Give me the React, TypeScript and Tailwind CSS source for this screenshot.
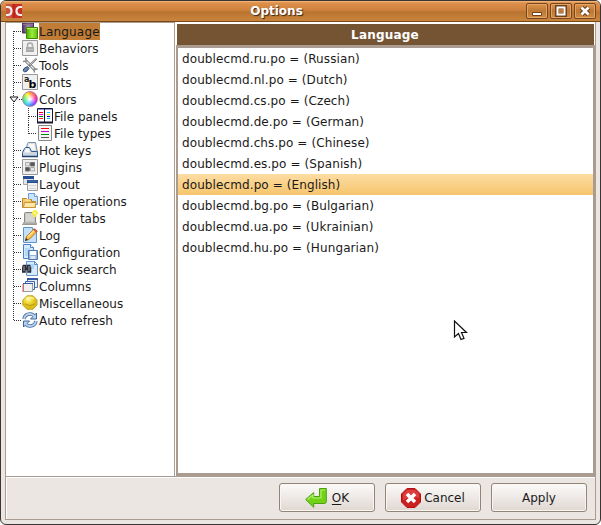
import React from "react";

const HLINE = "h-px bg-[repeating-linear-gradient(90deg,#333_0_1px,transparent_1px_2px)]";
const VLINE = "w-px bg-[repeating-linear-gradient(180deg,#333_0_1px,transparent_1px_2px)]";

function Sheet() {
  return (
    <>
      <path d="M4.500 .5h8l3 3v11h-11z" fill="#d5eaff" stroke="#6796d0" />
      <path d="M6 3h6v5H6z" fill="#aed3f7" />
      <path d="M12.500.5v3h3z" fill="#fff" stroke="#5b8cc8" />
    </>
  );
}

function Icon({ name }: { name: string }) {
  const art: Record<string, React.ReactNode> = {
    Language: (
      <>
        <defs>
          <linearGradient id="pur"><stop stopColor="#4d365a" /><stop offset=".5" stopColor="#a089aa" /><stop offset="1" stopColor="#6d527d" /></linearGradient>
          <linearGradient id="grn"><stop stopColor="#4da900" /><stop offset=".5" stopColor="#9bed3d" /><stop offset="1" stopColor="#62bd0c" /></linearGradient>
        </defs>
        <path d="M.5 0h11v10H.5z" fill="url(#pur)" stroke="#4b3159" />
        <path d="M1 1.500h10" stroke="#8d7399" />
        <path d="M4.500 4.500h11v11h-11z" fill="url(#grn)" stroke="#3c8c00" />
        <path d="M5 5.500h10" stroke="#baf36e" />
      </>
    ),
    Behaviors: (
      <>
        <path d="M.5 .5h15v15H.5z" fill="#f0f0f0" stroke="#999" />
        <path d="M5.500 8V5.500q0-2.500 2.500-2.500t2.500 2.500V8" fill="none" stroke="#aaa" strokeWidth="1.500" />
        <path d="M4 7h8v5H4z" fill="#aaa" />
        <path d="M5 9.500h6" stroke="#c2c2c2" />
      </>
    ),
    Tools: (
      <>
        <path d="M4 4l9 9" stroke="#666" strokeWidth="3" />
        <path d="M4 4l9 9" stroke="#eee" strokeWidth="1.400" />
        <path d="M3.500.8L4.500 4 1 4.500M12.500 15.500L12 12.500l3.500-.5" fill="none" stroke="#888" strokeWidth="1.500" />
        <path d="M14.500 1.500L7 9" stroke="#777" strokeWidth="2" />
        <path d="M14.500 1L8 8" stroke="#ddd" strokeWidth=".8" />
        <path d="M5.500 9.500l1.500 2-2.500 3q-2.500 1-3.500-1l1-2z" fill="#6788b3" stroke="#29486e" />
      </>
    ),
    Fonts: (
      <>
        <path d="M.5 .5h15v15H.5z" fill="#f0f0f0" stroke="#999" />
        <text x="2" y="7.500" fontSize="8" fontWeight="bold" fill="#222" className="font-['DejaVu_Sans']">a</text>
        <text x="6.500" y="13.500" fontSize="11" fontWeight="bold" fill="#000" className="font-['DejaVu_Sans']">b</text>
      </>
    ),
    "File panels": (
      <>
        <path d="M.5 .5h15v14H.5z" fill="#fff" stroke="#171733" />
        <path d="M1 1.500h14" stroke="#8791dd" />
        <path d="M0 14.500h16" stroke="#171733" strokeWidth="2" />
        <path d="M7.500 1v14" stroke="#171733" />
        <path d="M2 4.500h4" stroke="#f00" />
        <path d="M2 6.500h4" stroke="#f0f" /><path d="M2 8.500h4" stroke="#080" /><path d="M2 10.500h4" stroke="#f22" />
        <path d="M10 4.500h3" stroke="#0cf" /><path d="M10 6.500h3" stroke="#ee0" /><path d="M10 8.500h3" stroke="#00f" /><path d="M10 10.500h3" stroke="#0cc" />
      </>
    ),
    "File types": (
      <>
        <path d="M1.500 .5h13v15h-13z" fill="#f5f5f5" stroke="#888" />
        <path d="M4 3.500h8" stroke="#f00" /><path d="M4 6.500h8" stroke="#c0c" />
        <path d="M4 9.500h8" stroke="#080" /><path d="M4 12.500h8" stroke="#555" />
      </>
    ),
    "Hot keys": (
      <>
        <path d="M3.500 10.500l2-9q.3-1 1-1h7l2 10v3h-11z" fill="#ddd" stroke="#7890ad" />
        <path d="M6.500 2h6l.5 6H6z" fill="#f7f7f7" />
        <path d="M.5 14.500v-4l2-4q.5-1 1-1h4l2 4h6v5z" fill="#cdd6df" stroke="#315b92" />
        <path d="M4 6.500h3l1 4H2.500z" fill="#fafafa" /><path d="M0 14.500h16" stroke="#1d4175" strokeWidth="1.500" />
      </>
    ),
    Plugins: (
      <>
        <path d="M.5 .5h15v15H.5z" fill="#f0f0f0" stroke="#999" />
        <path d="M8.500 3.500h4V7h-4zM3.500 8.500h4V12h-4z" fill="#555" stroke="#777" />
        <path d="M3.500 3.500h4V7h-4zM8.500 8.500h4V12h-4z" fill="#e5e5e5" stroke="#aaa" />
      </>
    ),
    Layout: (
      <>
        <path d="M1.500 .5h10v8h-10z" fill="#e1e4e5" stroke="#a3a9ad" />
        <path d="M1 0h11v3H1z" fill="#234e90" />
        <path d="M5.500 5.500h10v9h-10z" fill="#f0f0f0" stroke="#9a9e9e" />
        <path d="M5 4h11v3H5z" fill="#234e90" /><path d="M6 5h9" stroke="#6991c7" strokeWidth=".6" />
        <path d="M7 9.500h7M7 12.500h7" stroke="#d5d8d8" />
      </>
    ),
    "File operations": (
      <>
        <path d="M6.500 .5h6l3 3v8h-9z" fill="#c9e3fc" stroke="#6c9edd" /><path d="M12.500.5v3h3" fill="#fff" stroke="#6c9edd" />
        <path d="M.5 14.500v-9h4l1 1h4v2h4v6z" fill="#f3c663" stroke="#bd882b" />
        <path d="M1.500 14.500l1-5h11.500l-1 5z" fill="#ffe8a5" stroke="#c9953a" /><path d="M3 7h5" stroke="#fff1bd" />
      </>
    ),
    "Folder tabs": (
      <>
        <path d="M2.500 12V3.500q0-1 1-1h9q1 0 1 1V12l1 2.500h-14z" fill="#c9c9c5" stroke="#888a85" />
        <path d="M4 4h8v7H4z" fill="#d5d5d1" /><path d="M1 13.500h14" stroke="#aaa" strokeWidth="2" />
        <path d="M13 0v7M10 3h6" stroke="#f8ed43" strokeWidth="3" /><path d="M13 2v2" stroke="#fff" />
      </>
    ),
    Log: (
      <>
        <path d="M1.500 .5h9l4 4v11h-13z" fill="#c5e1fa" stroke="#5e93cd" /><path d="M10.500.5v4h4" fill="#fff" stroke="#77a4d5" />
        <path d="M3.500 13.500l1-4 7.500-7.500 3 2.500-7.500 7.500z" fill="#fac246" stroke="#bb7118" />
        <path d="M6 9.500l6-6" stroke="#ffe393" strokeWidth="1.500" /><path d="M12 2l3 3" stroke="#c85c3b" strokeWidth="2" /><path d="M3 14l1-3 2 2z" fill="#333" />
      </>
    ),
    Configuration: (
      <>
        <path d="M1.500 .5h7l3 3v11h-10z" fill="#d5eaff" stroke="#4b83c4" /><path d="M8.500.5v3h3" fill="#fff" stroke="#4b83c4" /><path d="M3 4h5v8H3z" fill="#b5d8f7" />
        <path d="M6.500 6.500h9v9h-9z" fill="#8fb3dc" stroke="#4d79b1" /><path d="M8 7h6v4H8z" fill="#fff" /><path d="M8.500 12h5v3h-5z" fill="#dce7f2" />
      </>
    ),
    "Quick search": (
      <>
        <Sheet />
        <path d="M1 4h3v3h1V4h3l1 3v4.500H5.500V9h-2v2.500H0V7z" fill="#30343b" stroke="#202329" strokeWidth=".5" />
        <path d="M2 5v5M7 5v5" stroke="#929aa6" />
      </>
    ),
    Columns: (
      <>
        <path d="M5.500 .5h10v9h-10z" fill="#eceeee" stroke="#5877b2" /><path d="M5 1h11" stroke="#3659a3" strokeWidth="2" />
        <path d="M3.500 3.500h9v8h-9z" fill="#e9edf4" stroke="#4169b0" />
        <path d="M1.500 5.500h9v8h-9z" fill="#f1f1f1" stroke="#999ea5" /><path d="M1 5.500h10" stroke="#3659a3" /><path d="M1 6v8" stroke="#e15151" />
      </>
    ),
    Miscellaneous: (
      <>
        <defs><radialGradient id="yel" cx=".4" cy=".25"><stop stopColor="#fffbb5" /><stop offset=".5" stopColor="#f1df3d" /><stop offset="1" stopColor="#dcbc18" /></radialGradient></defs>
        <path d="M5 .8h6l4 4v5l-4 4.500H5L.8 10V5z" fill="url(#yel)" stroke="#c2a623" />
        <path d="M3 9q5 3 10 0" fill="none" stroke="#b99417" strokeWidth=".8" /><path d="M4 3.500q4-2 8 0" fill="none" stroke="#fffac1" />
      </>
    ),
    "Auto refresh": (
      <>
        <path d="M2 7q1-5 6-5 3 0 4 2" fill="none" stroke="#3e679e" strokeWidth="3.500" />
        <path d="M14.500 1v6h-6z" fill="#b8d2ee" stroke="#3e679e" />
        <path d="M2 7q1-5 6-5 3 0 4.500 2.500" fill="none" stroke="#b8d2ee" strokeWidth="1.800" />
        <path d="M14 9q-1 5-6 5-3 0-4-2" fill="none" stroke="#3e679e" strokeWidth="3.500" />
        <path d="M1.500 15V9h6z" fill="#b8d2ee" stroke="#3e679e" />
        <path d="M14 9q-1 5-6 5-3 0-4.500-2.500" fill="none" stroke="#b8d2ee" strokeWidth="1.800" />
      </>
    ),
  };
  if (name === "Colors")
    return <span className="block size-4 shrink-0 self-start rounded-full border border-[#b97bb5] bg-[radial-gradient(circle,white_5%,transparent_75%),conic-gradient(#ff8a00,#ff007a_20%,#b300ff_32%,#3544ff_43%,#00c7ff_56%,#00e785_70%,#79f000_82%,#fff000_92%,#ff8a00)]" />;
  return <svg className="block size-4 shrink-0 self-start" viewBox="0 0 16 16">{art[name]}</svg>;
}

const treeItems = ["Language", "Behaviors", "Tools", "Fonts", "Colors", "File panels", "File types", "Hot keys", "Plugins", "Layout", "File operations", "Folder tabs", "Log", "Configuration", "Quick search", "Columns", "Miscellaneous", "Auto refresh"];
const languages = ["ru.po = (Russian)", "nl.po = (Dutch)", "cs.po = (Czech)", "de.po = (German)", "chs.po = (Chinese)", "es.po = (Spanish)", "po = (English)", "bg.po = (Bulgarian)", "ua.po = (Ukrainian)", "hu.po = (Hungarian)"];

function TreeRow({ name }: { name: string }) {
  const child = name.startsWith("File ") && name !== "File operations";
  return (
    <div className="flex h-[17px] items-center">
      {child ? (
        <div className="flex h-[17px] w-[23px] shrink-0 justify-end">
          <div className={`${VLINE} ${name === "File types" ? "h-[9px]" : "h-[17px]"}`} />
          <div className={`${HLINE} mt-2 w-2`} />
        </div>
      ) : name === "Colors" ? (
        <svg className="-ml-[5px] block h-[9px] w-[13px] shrink-0" viewBox="0 0 13 9">
          <path d="M1 2h8L5 7z" fill="white" stroke="#111" />
          <path d="M10 4.500h1M12 4.500h1" stroke="#333" />
        </svg>
      ) : <div className={`${HLINE} w-2 shrink-0`} />}
      <Icon name={name} />
      <span className={`ml-px h-[17px] whitespace-nowrap leading-[19px] ${name === "Language" ? "bg-[#c17d35] tracking-[.2px]" : ""}`}>{name}</span>
    </div>
  );
}

function WinButton({ children }: { children: React.ReactNode }) {
  return (
    <div className="h-4 w-[22px] rounded-[2px] border border-[#77461c] bg-linear-to-b from-[#dd934d] via-[#bd7835] to-[#d18b42] shadow-[inset_0_0_0_1px_#e3a468]">
      <svg className="block h-[14px] w-5" viewBox="0 0 20 14">{children}</svg>
    </div>
  );
}

function DialogButton({ children }: { children: React.ReactNode }) {
  return <button className="flex h-[29px] w-24 items-center justify-center rounded-[3px] border border-[#918577] bg-linear-to-b from-[#fbfaf9] via-[#eee9e6] to-[#dfd7d1] shadow-[inset_0_0_0_1px_#f8f5f3]">{children}</button>;
}

export default function App() {
  return (
    <div className="h-[525px] w-[601px] overflow-hidden bg-white font-['DejaVu_Sans',sans-serif] text-[12px] text-[#1a1a1a]">
      <div className="flex h-[525px] flex-col overflow-hidden rounded-[6px] border border-[#3a3434] bg-[#ebe6e2]">
        <header className="flex h-[21px] shrink-0 items-center border-b border-[#784817] bg-[linear-gradient(180deg,#efaa6b_0%,#dd914c_10%,#cf813d_45%,#b9752f_55%,#c9843e_100%)] pr-[3px] pl-[5px] shadow-[inset_0_1px_#f1b276]">
          <svg className="h-[14px] w-4" viewBox="0 0 16 14">
            <path d="M0 0h16v14H0z" fill="#c92e22" /><path d="M0 0h6v14H0z" fill="#cb5440" />
            <path d="M0 3h1.500q4 0 4 4t-4 4H0M16 3h-1.500q-4 0-4 4t4 4H16" fill="none" stroke="#eee" strokeWidth="2.200" />
            <path d="M8 0v14" stroke="#b61c17" />
          </svg>
          <h1 className="w-[504px] pl-[5px] text-center text-[12px] font-bold leading-5 text-white [text-shadow:1px_1px_1px_#382615]">Options</h1>
          <div className="flex gap-[2px]">
            <WinButton><path d="M5.500 8.500h9v3h-9z" fill="#fff" stroke="#70421c" /></WinButton>
            <WinButton><path d="M6 3h8v8H6z" fill="none" stroke="#70421c" strokeWidth="4" /><path d="M6.500 3.500h7v7h-7z" fill="none" stroke="#fff" strokeWidth="2" /></WinButton>
            <WinButton><path d="M6.500 3.500l7 7m0-7l-7 7" stroke="#70421c" strokeWidth="5" /><path d="M6.500 3.500l7 7m0-7l-7 7" stroke="#fff" strokeWidth="2.700" /></WinButton>
          </div>
        </header>
        <div className="mx-1 flex h-[498px] shrink-0 flex-col border-x border-b border-[#aa9c90]">
          <main className="flex h-[455px] shrink-0 border-b border-[#aa9c90] bg-white">
            <nav className="flex w-[169px] shrink-0 border-t border-r border-[#aa9c90] pl-[7px]">
              <div className={`${VLINE} mt-2 h-[290px] shrink-0`} />
              <div>{treeItems.map((item) => <TreeRow key={item} name={item} />)}</div>
            </nav>
            <section className="ml-px flex w-[419px] flex-col pt-[2px]">
              <h2 className="mr-px ml-px h-[21px] bg-[#755433] pr-px text-center font-bold leading-[22px] tracking-[.2px] text-white">Language</h2>
              <div className="h-[431px] border-[3px] border-r-2 border-l-2 border-[#aa9c90] bg-white">
                {languages.map((language) => (
                  <div key={language} className={`h-[21px] pl-1 leading-[23px] tracking-[.1px] whitespace-nowrap ${language === "po = (English)" ? "bg-linear-to-b from-[#fddda3] to-[#f6c56c]" : ""}`}>doublecmd.{language}</div>
                ))}
              </div>
            </section>
          </main>
          <footer className="flex h-[42px] gap-[10px] border-t border-l border-white bg-[#ebe6e2] pt-[5px] pl-[272px]">
            <DialogButton>
              <svg className="mr-[5px] h-5 w-[22px]" viewBox="0 0 22 20">
                <path d="M.7 11.500l8-7v4h5.800v-8h6.800v13q0 2-2 2H8.700v3.800z" fill="#73d216" stroke="#4ba10d" />
                <path d="M2.500 11.500L8 7v3h8V2h4" fill="none" stroke="#aeef6c" strokeWidth="1.200" />
              </svg>
              <span><span className="underline underline-offset-2">O</span>K</span>
            </DialogButton>
            <DialogButton>
              <svg className="mr-[3px] size-5" viewBox="0 0 20 20">
                <path d="M6 .5h8L19.500 6v8L14 19.500H6L.5 14V6z" fill="#cc1f1f" stroke="#b51010" />
                <path d="M6 2h8l4 4v4Q10 8 2 12V6z" fill="#e75555" opacity=".6" />
                <path d="M6 6l8 8m0-8l-8 8" stroke="#fff" strokeWidth="3.500" />
              </svg>
              Cancel
            </DialogButton>
            <DialogButton>Apply</DialogButton>
          </footer>
        </div>
      </div>
      <svg className="absolute top-[320px] left-[453px] h-6 w-4" viewBox="0 0 16 24">
        <path d="M1.500 1v16l4-3.500 2.500 6 3-1.200-2.500-5.800h5z" fill="white" stroke="#111" strokeWidth="1.200" />
      </svg>
    </div>
  );
}
